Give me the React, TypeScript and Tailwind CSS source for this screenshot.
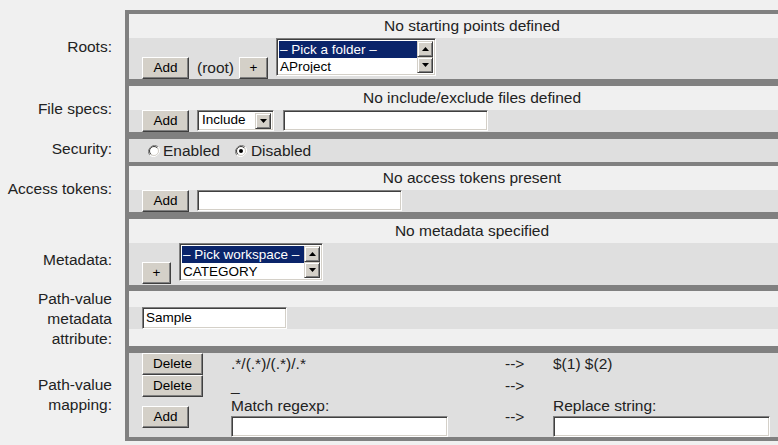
import type React from "react"

const DARK = "bg-[#dfdfdf]"
const LIGHT = "bg-[#f0f0f0]"

function Btn({ children, className = "" }: { children: React.ReactNode; className?: string }) {
  return (
    <button
      type="button"
      className={`h-[22px] shrink-0 bg-[#d4d0c8] border border-t-white border-l-white border-r-[#404040] border-b-[#404040] shadow-[inset_-1px_-1px_0_#808080] text-[13.5px] leading-none text-black ${className}`}
    >
      {children}
    </button>
  )
}

const inset =
  "border border-t-[#808080] border-l-[#808080] border-b-white border-r-white shadow-[inset_1px_1px_0_#404040,inset_-1px_-1px_0_#d4d0c8] bg-white"

function Arrow({ up }: { up?: boolean }) {
  return (
    <div className="w-[16px] h-[16px] bg-[#d4d0c8] border border-t-[#d4d0c8] border-l-[#d4d0c8] border-r-[#404040] border-b-[#404040] shadow-[inset_1px_1px_0_white,inset_-1px_-1px_0_#808080] flex items-center justify-center">
      <svg width="7" height="4" viewBox="0 0 7 4">
        {up ? <polygon points="3.5,0 7,4 0,4" fill="black" /> : <polygon points="0,0 7,0 3.5,4" fill="black" />}
      </svg>
    </div>
  )
}

function TextInput({ className = "", value = "" }: { className?: string; value?: string }) {
  return (
    <div className={`${inset} h-[21px] flex items-center px-[3px] text-[13.5px] text-black ${className}`}>{value}</div>
  )
}

function ListBox({ first, second, className = "" }: { first: string; second: string; className?: string }) {
  return (
    <div className={`${inset} h-[38px] p-[2px] flex ${className}`}>
      <div className="flex-1 flex flex-col text-[13.5px] leading-[17px] overflow-hidden whitespace-nowrap">
        <div className="h-[17px] bg-[#0a246a] text-white px-[1px]">{first}</div>
        <div className="h-[17px] text-black px-[1px]">{second}</div>
      </div>
      <div className="w-[16px] flex flex-col">
        <Arrow up />
        <div className="flex-1 bg-[repeating-conic-gradient(#ffffff_0_25%,#d4d0c8_0_50%)] bg-[length:2px_2px]" />
        <Arrow />
      </div>
    </div>
  )
}

function Radio({ checked }: { checked?: boolean }) {
  return (
    <svg width="12" height="12" viewBox="0 0 12 12" className="shrink-0">
      <path d="M10.2 1.8 A6 6 0 0 0 1.8 10.2" stroke="#808080" strokeWidth="1" fill="none" />
      <path d="M1.8 10.2 A6 6 0 0 0 10.2 1.8" stroke="#ffffff" strokeWidth="1" fill="none" />
      <circle cx="6" cy="6" r="4.5" fill="white" stroke="#d4d0c8" strokeWidth="1" />
      <path d="M9.2 2.8 A4.5 4.5 0 0 0 2.8 9.2" stroke="#404040" strokeWidth="1" fill="none" />
      {checked && <circle cx="6" cy="6" r="2" fill="black" />}
    </svg>
  )
}

function Sep() {
  return <div className="ml-[125px] h-[7px] bg-[#808080]" />
}

function Row({ label, height, labelClass = "", children }: { label: React.ReactNode; height: string; labelClass?: string; children: React.ReactNode }) {
  return (
    <div className={`flex ${height}`}>
      <div className={`w-[125px] shrink-0 flex items-center justify-end pr-[13px] text-right text-[15.5px] leading-[20px] text-[#222] ${labelClass}`}>
        {label}
      </div>
      <div className="w-[690px] shrink-0 border-l-4 border-[#808080] flex flex-col">{children}</div>
    </div>
  )
}

function Header({ text }: { text: string }) {
  return (
    <div className={`${LIGHT} h-[24px] shrink-0 flex items-center justify-center text-[15.5px] text-[#222]`}>{text}</div>
  )
}

export default function App() {
  return (
    <div className="w-[778px] h-[445px] overflow-hidden bg-[#f0f0f0] font-['Liberation_Sans',Arial,sans-serif] pt-[10px]">
      <div className="w-[815px]">
        <div className="ml-[125px] h-[4px] bg-[#808080]" />

        <Row label="Roots:" height="h-[65px]">
          <Header text="No starting points defined" />
          <div className={`${DARK} flex-1 flex items-end pl-[13px]`}>
            <Btn className="w-[47px]">Add</Btn>
            <span className="ml-[8px] h-[22px] flex items-center text-[15.5px] text-[#222]">(root)</span>
            <Btn className="ml-[5px] w-[29px]">+</Btn>
            <ListBox className="ml-[8px] mb-[3px] w-[160px]" first="– Pick a folder –" second="AProject" />
          </div>
        </Row>
        <Sep />

        <Row label="File specs:" height="h-[46px]">
          <Header text="No include/exclude files defined" />
          <div className={`${DARK} flex-1 flex items-start pl-[13px]`}>
            <Btn className="w-[47px]">Add</Btn>
            <div className={`${inset} ml-[8px] w-[77px] h-[21px] flex items-center p-[2px] text-[13.5px] text-black`}>
              <span className="flex-1 pl-[2px]">Include</span>
              <Arrow />
            </div>
            <TextInput className="ml-[9px] w-[205px]" />
          </div>
        </Row>
        <Sep />

        <Row label="Security:" height="h-[20px]">
          <div className={`${DARK} flex-1 flex items-center pl-[19px] text-[15.5px] text-[#222]`}>
            <Radio />
            <span className="ml-[3px]">Enabled</span>
            <span className="ml-[15px]"><Radio checked /></span>
            <span className="ml-[4px]">Disabled</span>
          </div>
        </Row>
        <Sep />

        <Row label="Access tokens:" height="h-[46px]">
          <Header text="No access tokens present" />
          <div className={`${DARK} flex-1 flex items-start pl-[13px]`}>
            <Btn className="w-[47px]">Add</Btn>
            <TextInput className="ml-[8px] w-[205px]" />
          </div>
        </Row>
        <Sep />

        <Row label="Metadata:" height="h-[65px]" labelClass="pt-[16px]">
          <Header text="No metadata specified" />
          <div className={`${DARK} flex-1 flex items-end pl-[13px]`}>
            <Btn className="mb-[1px] w-[29px]">+</Btn>
            <ListBox className="ml-[8px] mb-[4px] w-[144px]" first="– Pick workspace –" second="CATEGORY" />
          </div>
        </Row>
        <Sep />

        <Row
          label={
            <span>
              Path-value
              <br />
              metadata
              <br />
              attribute:
            </span>
          }
          height="h-[55px]"
        >
          <div className={`${LIGHT} h-[16px]`} />
          <div className={`${DARK} h-[22px] flex items-center pl-[13px]`}>
            <TextInput className="w-[145px] h-[22px]" value="Sample" />
          </div>
          <div className={`${LIGHT} flex-1`} />
        </Row>
        <Sep />

        <Row
          label={
            <span>
              Path-value
              <br />
              mapping:
            </span>
          }
          height="h-[84px]"
        >
          <div className={`${DARK} flex-1 grid grid-cols-[89px_274px_48px_1fr] grid-rows-[22px_22px_40px] pl-[13px] text-[15.5px] text-[#222]`}>
            <div className="flex items-center">
              <Btn className="w-[61px]">Delete</Btn>
            </div>
            <div className="flex items-center">.*/(.*)/(.*)/.*</div>
            <div className="flex items-center">--&gt;</div>
            <div className="flex items-center">$(1) $(2)</div>

            <div className="flex items-center">
              <Btn className="w-[61px]">Delete</Btn>
            </div>
            <div className="flex items-center">_</div>
            <div className="flex items-center">--&gt;</div>
            <div />

            <div className="flex items-center">
              <Btn className="w-[47px]">Add</Btn>
            </div>
            <div className="flex flex-col">
              <span className="leading-[18px] h-[19px]">Match regexp:</span>
              <TextInput className="w-[217px]" />
            </div>
            <div className="flex items-center">--&gt;</div>
            <div className="flex flex-col">
              <span className="leading-[18px] h-[19px]">Replace string:</span>
              <TextInput className="w-[217px]" />
            </div>
          </div>
        </Row>
        <div className="ml-[125px] h-[4px] bg-[#808080]" />
      </div>
    </div>
  )
}
